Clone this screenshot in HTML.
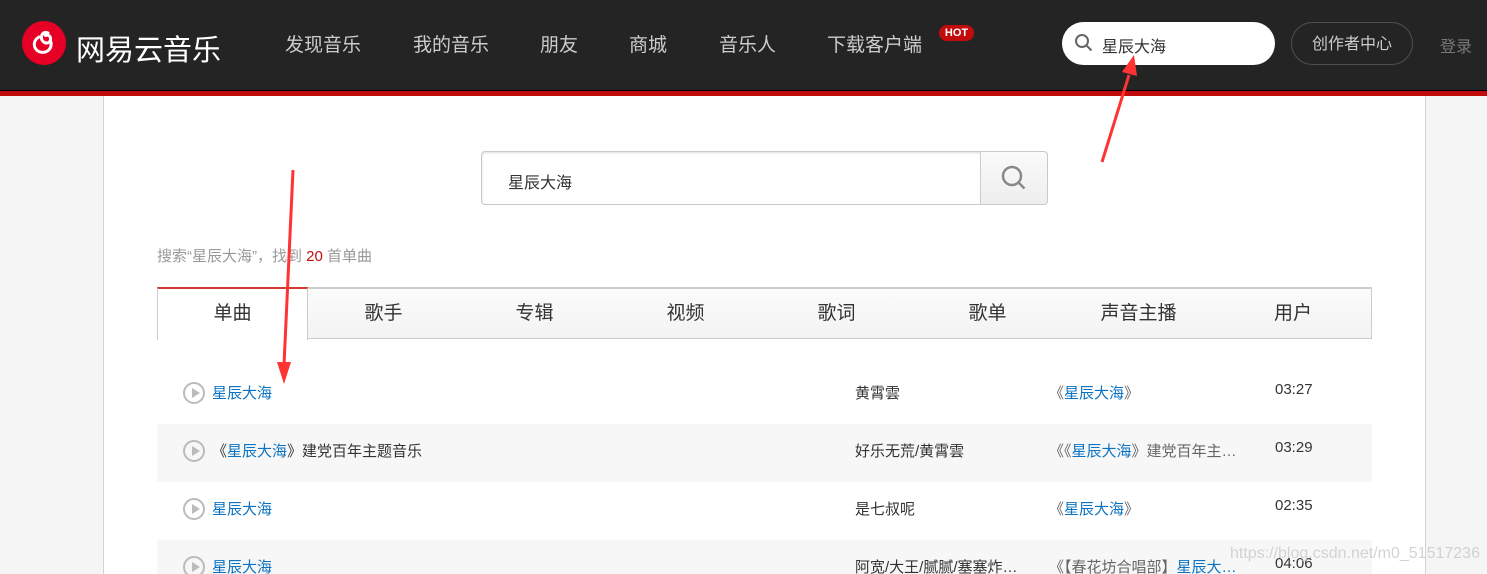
<!DOCTYPE html>
<html style="overflow:hidden;height:574px"><head><meta charset="utf-8"><style>
*{margin:0;padding:0;box-sizing:border-box}
body{width:1487px;height:574px;overflow:hidden;background:#f5f5f5;font-family:"Liberation Sans","Noto Sans CJK SC",sans-serif;position:relative}
.hd{position:absolute;left:0;top:0;width:1487px;height:91px;background:#242424;border-bottom:1px solid #000}
.red{position:absolute;left:0;top:91px;width:1487px;height:5px;background:#c20c0c}
.abs{position:absolute;white-space:nowrap}
.nav{color:#ccc;font-size:19px;top:30px}
.main{position:absolute;left:103px;top:96px;width:1323px;height:478px;background:#fff;border-left:1px solid #d3d3d3;border-right:1px solid #d3d3d3}
.tab{position:absolute;top:289px;height:50px;width:151px;text-align:center;line-height:50px;font-size:19px;color:#333}
.row{position:absolute;left:157px;width:1215px;height:58px;overflow:hidden}
.row.g{background:#f7f7f7}
.play{position:absolute;left:26px;top:16px;width:22px;height:22px;border:2px solid #bbb;border-radius:50%}
.play:after{content:"";position:absolute;left:7px;top:4px;border-left:8px solid #bbb;border-top:5px solid transparent;border-bottom:5px solid transparent}
.t{position:absolute;top:16px;font-size:15px;color:#333}
.b{color:#0c73c2}
.c2{left:698px}.c3{left:892px;color:#666}.c4{left:1118px;color:#333;font-size:15px}
</style></head><body>
<div class="hd"></div><div class="red"></div>
<svg class="abs" style="left:22px;top:21px" width="44" height="44" viewBox="0 0 44 44"><circle cx="22" cy="22" r="22" fill="#e60026"/><path d="M26 12c-3-1.5-6 0-6.5 3.5-.5 3 1.5 6 4.5 6.5 3 .3 5-2 4.5-5-.5-2.5-3-3.5-5-2.5M17 16c-4.5 2.5-6 7.5-3.5 11.5 2.5 4 8 5 12 2.5 3.5-2.5 4.5-7 3-10" fill="none" stroke="#fff" stroke-width="3" stroke-linecap="round"/></svg>
<div class="abs" style="left:76px;top:27px;font-size:29px;color:#fff">网易云音乐</div>
<div class="abs nav" style="left:285px">发现音乐</div>
<div class="abs nav" style="left:413px">我的音乐</div>
<div class="abs nav" style="left:540px">朋友</div>
<div class="abs nav" style="left:629px">商城</div>
<div class="abs nav" style="left:719px">音乐人</div>
<div class="abs nav" style="left:827px">下载客户端</div>
<div class="abs" style="left:939px;top:25px;width:35px;height:16px;border-radius:8px;background:#c20c0c;color:#fff;font-size:11px;font-weight:bold;text-align:center;line-height:16px">HOT</div>
<div class="abs" style="left:1062px;top:22px;width:213px;height:43px;border-radius:22px;background:#fff"></div>
<svg class="abs" style="left:1074px;top:33px" width="20" height="20" viewBox="0 0 20 20"><circle cx="8" cy="8" r="6" fill="none" stroke="#666" stroke-width="2"/><path d="M12.5 12.5l5 5" stroke="#666" stroke-width="2"/></svg>
<div class="abs" style="left:1102px;top:33px;font-size:16px;color:#333">星辰大海</div>
<div class="abs" style="left:1291px;top:22px;width:122px;height:43px;border-radius:22px;border:1px solid #4f4f4f;color:#ccc;font-size:16px;text-align:center;line-height:43px">创作者中心</div>
<div class="abs" style="left:1440px;top:33px;font-size:16px;color:#787878">登录</div>
<div class="main"></div>
<div class="abs" style="left:481px;top:151px;width:567px;height:54px;border:1px solid #c9c9c9;border-radius:4px;background:#fff;box-shadow:inset 0 1px 2px #ddd"></div>
<div class="abs" style="left:980px;top:152px;width:67px;height:52px;border-left:1px solid #ccc;background:linear-gradient(#fafafa,#eee);border-radius:0 4px 4px 0"></div>
<svg class="abs" style="left:1000px;top:164px" width="28" height="28" viewBox="0 0 28 28"><circle cx="12" cy="12" r="9" fill="none" stroke="#888" stroke-width="2.5"/><path d="M18.5 18.5l6 6" stroke="#888" stroke-width="2.5"/></svg>
<div class="abs" style="left:508px;top:169px;font-size:16px;color:#333">星辰大海</div>
<div class="abs" style="left:157px;top:245px;font-size:15px;color:#999">搜索“星辰大海”，找到 <span style="color:#c20c0c">20</span> 首单曲</div>
<div class="abs" style="left:157px;top:287px;width:1215px;height:52px;border:1px solid #ccc;border-top:2px solid #ccc;background:linear-gradient(#fbfbfb,#f3f3f3)"></div>
<div class="abs" style="left:157px;top:287px;width:151px;height:53px;border-top:2px solid #d33a31;border-right:1px solid #ccc;border-left:1px solid #ccc;background:#fff"></div>
<div class="tab" style="left:157px">单曲</div>
<div class="tab" style="left:308px">歌手</div>
<div class="tab" style="left:459px">专辑</div>
<div class="tab" style="left:610px">视频</div>
<div class="tab" style="left:761px">歌词</div>
<div class="tab" style="left:912px">歌单</div>
<div class="tab" style="left:1063px">声音主播</div>
<div class="tab" style="left:1214px;width:158px">用户</div>
<div class="row" style="top:366px"><div class="play"></div><div class="t b" style="left:55px">星辰大海</div><div class="t c2">黄霄雲</div><div class="t c3">《<span class="b">星辰大海</span>》</div><div class="t c4" style="top:15px">03:27</div></div>
<div class="row g" style="top:424px"><div class="play"></div><div class="t" style="left:55px">《<span class="b">星辰大海</span>》建党百年主题音乐</div><div class="t c2">好乐无荒/黄霄雲</div><div class="t c3">《《<span class="b">星辰大海</span>》建党百年主…</div><div class="t c4" style="top:15px">03:29</div></div>
<div class="row" style="top:482px"><div class="play"></div><div class="t b" style="left:55px">星辰大海</div><div class="t c2">是七叔呢</div><div class="t c3">《<span class="b">星辰大海</span>》</div><div class="t c4" style="top:15px">02:35</div></div>
<div class="row g" style="top:540px;height:34px"><div class="play"></div><div class="t b" style="left:55px">星辰大海</div><div class="t c2">阿宽/大王/腻腻/塞塞炸…</div><div class="t c3">《【春花坊合唱部】<span class="b">星辰大…</span></div><div class="t c4" style="top:15px">04:06</div></div>
<div class="abs" style="left:1230px;top:545px;font-size:16px;color:rgba(200,200,200,.8)">https://blog.csdn.net/m0_51517236</div>
<svg class="abs" style="left:0;top:0" width="1487" height="574"><path d="M293 170L284 365" stroke="#f33" stroke-width="3"/><path d="M277 362L284 384L291 362Z" fill="#f33"/><path d="M1102 162L1129 75" stroke="#f33" stroke-width="3"/><path d="M1122 72L1134 55L1137 76Z" fill="#f33"/></svg>
</body></html>
